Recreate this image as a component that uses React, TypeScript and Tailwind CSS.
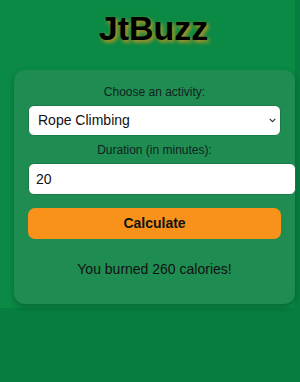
import { useState } from "react";

const rates: Record<string, number> = {
  "Rope Climbing": 13,
  Running: 11,
  Cycling: 8,
  Swimming: 10,
  Walking: 4,
};

export default function App() {
  const [activity, setActivity] = useState("Rope Climbing");
  const [minutes, setMinutes] = useState("20");
  const [burned, setBurned] = useState<number | null>(260);

  const calculate = () => {
    const m = parseFloat(minutes) || 0;
    setBurned(Math.round(m * (rates[activity] ?? 0)));
  };

  return (
    <div className="min-h-[382px] w-[300px] bg-[#077d3f]" style={{ fontFamily: '"Liberation Sans", Arial, sans-serif' }}>
      <div className="w-[295px] h-[308px] bg-[#0a8a45] pt-[8px]">
        <h1
          className="pl-[12px] text-center text-[34px] leading-[40px] font-bold text-black"
          style={{ textShadow: "2px 2px 4px rgba(225,150,25,0.95)" }}
        >
          JtBuzz
        </h1>

        {/* Calculator card */}
        <div className="ml-[14px] mt-[22px] w-[281px] rounded-[11px] bg-[#1f8d51] px-[14px] pt-[14px] pb-[25px] shadow-[0_3px_6px_rgba(0,0,0,0.25)]">
          <label className="block text-center text-[12px] leading-[16px] text-[#122]">Choose an activity:</label>
          <div className="relative mt-[5px]">
            <select
              value={activity}
              onChange={(e) => setActivity(e.target.value)}
              className="block h-[31px] w-full appearance-none rounded-[6px] border border-[#1a7a45] bg-white pl-[9px] text-[14px] text-[#111] outline-none"
            >
              {Object.keys(rates).map((a) => (
                <option key={a}>{a}</option>
              ))}
            </select>
            <svg className="pointer-events-none absolute right-[5px] top-[13px]" width="7" height="5" viewBox="0 0 7 5">
              <path d="M0.7 0.8 L3.5 3.6 L6.3 0.8" fill="none" stroke="#333" strokeWidth="1.1" />
            </svg>
          </div>

          <label className="mt-[6px] block text-center text-[12px] leading-[16px] text-[#122]">Duration (in minutes):</label>
          <input
            value={minutes}
            onChange={(e) => setMinutes(e.target.value)}
            className="mt-[5px] block h-[32px] w-[268px] rounded-[6px] border border-[#1a7a45] bg-white pl-[7px] text-[14px] text-[#111] outline-none"
          />

          <button
            onClick={calculate}
            className="mt-[13px] block h-[31px] w-full rounded-[7px] bg-[#f8921a] text-[14px] font-bold text-[#111]"
          >
            Calculate
          </button>

          {burned !== null ? (
            <p className="mt-[20px] text-center text-[14px] leading-[20px] text-[#111]">You burned {burned} calories!</p>
          ) : null}
        </div>
      </div>
    </div>
  );
}
